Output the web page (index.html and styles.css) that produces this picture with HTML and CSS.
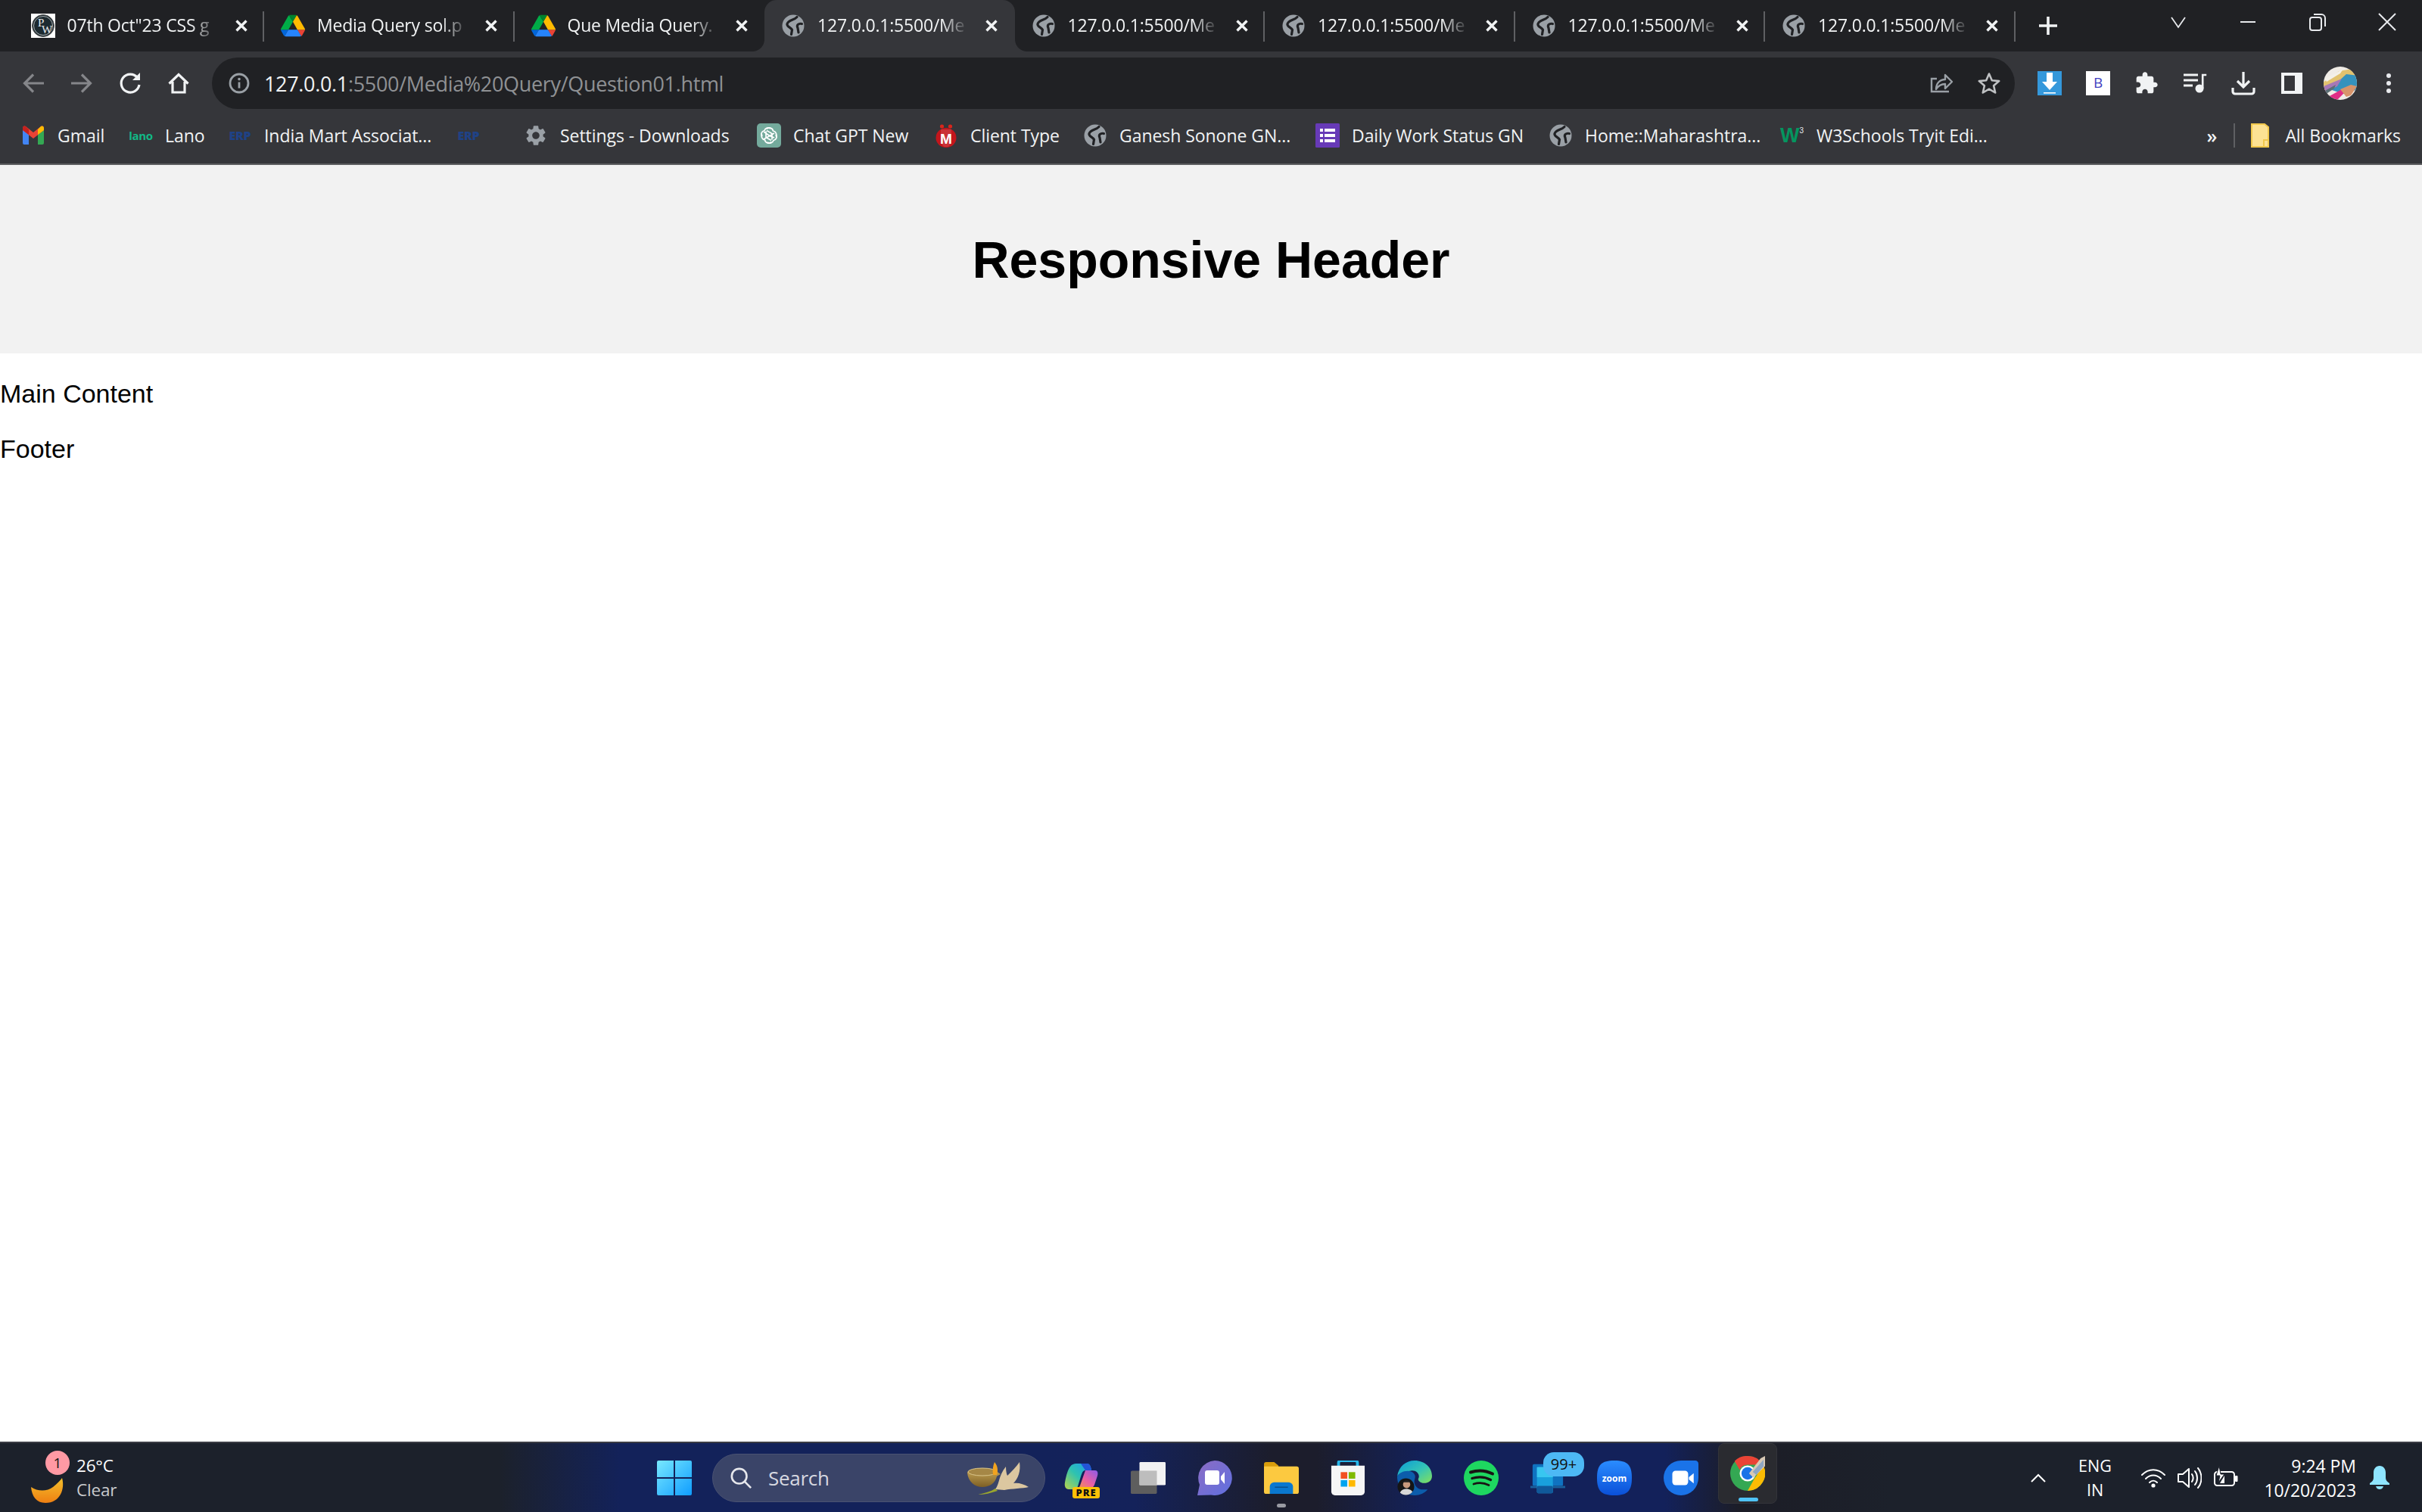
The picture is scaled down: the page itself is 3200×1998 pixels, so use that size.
FILE: index.html
```html
<!DOCTYPE html>
<html lang="en">
<head>
<meta charset="utf-8">
<title>Responsive Header</title>
<link rel="stylesheet" href="styles.css">
</head>
<body>
<svg class="defs" aria-hidden="true">
  <symbol id="globe" viewBox="0 0 32 32"><circle cx="16" cy="16" r="14.500" fill="#9aa0a6"/><g fill="none" stroke="#202124" stroke-width="3.200" stroke-linecap="round"><path d="M21 4.500C17 9 10 8 8 13.500c-1 4 5 4.500 6.500 8l-1 6"/><path d="M27.500 13.500c-4.500-1-7.500 1.500-5.500 5.500l1 6"/></g></symbol>
  <symbol id="drive" viewBox="0 0 87.3 78"><path d="m6.6 66.85 3.85 6.65c.8 1.4 1.95 2.5 3.3 3.3l13.75-23.8h-27.5c0 1.55.4 3.1 1.2 4.5z" fill="#0066da"/><path d="m43.65 25-13.75-23.8c-1.35.8-2.5 1.9-3.3 3.3l-25.4 44a9.06 9.06 0 0 0 -1.2 4.5h27.5z" fill="#00ac47"/><path d="m73.55 76.8c1.35-.8 2.5-1.9 3.3-3.3l1.6-2.75 7.65-13.25c.8-1.4 1.2-2.95 1.2-4.5h-27.502l5.852 11.5z" fill="#ea4335"/><path d="m43.65 25 13.75-23.8c-1.35-.8-2.9-1.2-4.5-1.2h-18.5c-1.6 0-3.15.45-4.5 1.2z" fill="#00832d"/><path d="m59.8 53h-32.3l-13.75 23.8c1.35.8 2.9 1.2 4.5 1.2h50.8c1.6 0 3.15-.45 4.5-1.2z" fill="#2684fc"/><path d="m73.4 26.5-12.7-22c-.8-1.4-1.95-2.5-3.3-3.3l-13.75 23.8 16.15 28h27.45c0-1.55-.4-3.1-1.2-4.5z" fill="#ffba00"/></symbol>
  <symbol id="close" viewBox="0 0 34 34"><path d="M10.5 10.5l13 13M23.5 10.5l-13 13" stroke="#f1f3f4" stroke-width="3.4" fill="none"/></symbol>
</svg>

<div class="chrome">
  <div class="tabstrip">
    <div class="tab sep">
      <svg class="favicon" viewBox="0 0 32 32"><rect width="32" height="32" fill="#fff"/><circle cx="16" cy="16" r="14.5" fill="#1d2a30" stroke="#555" stroke-width="1"/><circle cx="16" cy="16" r="12.5" fill="none" stroke="#cfd3d4" stroke-width=".8"/><text x="9" y="17" class="pw">P</text><text x="14" y="26" class="pw">W</text></svg>
      <span class="title">07th Oct"23 CSS g</span>
      <svg class="close"><use href="#close"/></svg>
    </div>
    <div class="tab sep">
      <svg class="favicon"><use href="#drive"/></svg>
      <span class="title">Media Query sol.p</span>
      <svg class="close"><use href="#close"/></svg>
    </div>
    <div class="tab">
      <svg class="favicon"><use href="#drive"/></svg>
      <span class="title">Que Media Query.</span>
      <svg class="close"><use href="#close"/></svg>
    </div>
    <div class="tab active">
      <svg class="favicon"><use href="#globe"/></svg>
      <span class="title">127.0.0.1:5500/Me</span>
      <svg class="close"><use href="#close"/></svg>
    </div>
    <div class="tab sep">
      <svg class="favicon"><use href="#globe"/></svg>
      <span class="title">127.0.0.1:5500/Me</span>
      <svg class="close"><use href="#close"/></svg>
    </div>
    <div class="tab sep">
      <svg class="favicon"><use href="#globe"/></svg>
      <span class="title">127.0.0.1:5500/Me</span>
      <svg class="close"><use href="#close"/></svg>
    </div>
    <div class="tab sep">
      <svg class="favicon"><use href="#globe"/></svg>
      <span class="title">127.0.0.1:5500/Me</span>
      <svg class="close"><use href="#close"/></svg>
    </div>
    <div class="tab sep">
      <svg class="favicon"><use href="#globe"/></svg>
      <span class="title">127.0.0.1:5500/Me</span>
      <svg class="close"><use href="#close"/></svg>
    </div>
    <svg class="newtab" viewBox="0 0 32 32"><path d="M16 4v24M4 16h24" stroke="#f1f3f4" stroke-width="3.6"/></svg>
    <div class="winctl">
      <svg viewBox="0 0 32 32"><path d="M7 10l9 13 9-13" stroke="#e8eaed" stroke-width="1.8" fill="none"/></svg>
      <svg viewBox="0 0 32 32"><path d="M6 16h20" stroke="#e8eaed" stroke-width="2"/></svg>
      <svg viewBox="0 0 32 32"><rect x="6" y="10" width="15" height="17" rx="3" stroke="#e8eaed" stroke-width="2" fill="none"/><path d="M11 6h10a5 5 0 0 1 5 5v11" stroke="#e8eaed" stroke-width="2" fill="none"/></svg>
      <svg viewBox="0 0 32 32"><path d="M5 5l22 22M27 5L5 27" stroke="#e8eaed" stroke-width="2"/></svg>
    </div>
  </div>

  <div class="toolbar">
    <div class="navbtns">
      <svg viewBox="0 0 32 32"><path d="M30 16H5M16 4.5 4.5 16 16 27.5" stroke="#85868a" stroke-width="3.2" fill="none"/></svg>
      <svg viewBox="0 0 32 32"><path d="M2 16h25M16 4.5 27.5 16 16 27.5" stroke="#85868a" stroke-width="3.2" fill="none"/></svg>
      <svg viewBox="0 0 32 32"><path d="M25.5 8.5A12 12 0 1 0 28 18" stroke="#f1f3f4" stroke-width="3.2" fill="none"/><path d="M19 12h10V2z" fill="#f1f3f4"/></svg>
      <svg viewBox="0 0 32 32"><path d="M3.5 16.5 16 4.5l12.5 12M8 14v14h16V14" stroke="#f1f3f4" stroke-width="3.2" fill="none"/></svg>
    </div>
    <div class="omnibox">
      <svg class="info" viewBox="0 0 28 28"><circle cx="14" cy="14" r="12" stroke="#9aa0a6" stroke-width="2.8" fill="none"/><path d="M14 12.5v8" stroke="#9aa0a6" stroke-width="2.8"/><circle cx="14" cy="8.6" r="1.8" fill="#9aa0a6"/></svg>
      <span class="url"><span class="host">127.0.0.1</span>:5500/Media%20Query/Question01.html</span>
      <svg class="omni-ic" viewBox="0 0 32 32"><path d="M26 27H3V10h7" stroke="#9aa0a6" stroke-width="2.4" fill="none"/><path d="M9 24c0-8 5-13 12-13V5l9 9-9 9v-6c-5 0-9 2-12 7z" stroke="#9aa0a6" stroke-width="2.4" fill="none" stroke-linejoin="round"/></svg>
      <svg class="omni-ic star" viewBox="0 0 32 32"><path d="M16 3.5l3.8 8.7 9.4.9-7.1 6.2 2.1 9.2L16 23.7l-8.2 4.8 2.1-9.2-7.1-6.2 9.4-.9z" stroke="#bfc1c3" stroke-width="2.6" fill="none" stroke-linejoin="round"/></svg>
    </div>
    <div class="extensions">
      <svg viewBox="0 0 32 32"><rect width="32" height="32" fill="#3498db"/><path d="M12 2h8v12h6L16 25 6 14h6z" fill="#fff"/><rect x="8" y="28" width="16" height="1.6" fill="#fff"/></svg>
      <svg viewBox="0 0 32 32"><rect width="32" height="32" fill="#fff"/><text x="16" y="22" class="ext-b">B</text></svg>
      <svg viewBox="0 0 24 24"><path fill="#f1f3f4" d="M20.5 11H19V7c0-1.1-.9-2-2-2h-4V3.5C13 2.12 11.88 1 10.5 1S8 2.12 8 3.5V5H4c-1.1 0-1.99.9-1.99 2v3.8H3.5c1.49 0 2.7 1.21 2.7 2.7s-1.21 2.7-2.7 2.7H2V20c0 1.1.9 2 2 2h3.8v-1.5c0-1.49 1.21-2.7 2.7-2.7 1.49 0 2.7 1.21 2.7 2.7V22H17c1.1 0 2-.9 2-2v-4h1.5c1.38 0 2.5-1.12 2.5-2.5S21.88 11 20.5 11z"/></svg>
      <svg viewBox="0 0 32 32"><path d="M1 5h19M1 12h19M1 19h12" stroke="#f1f3f4" stroke-width="2.8"/><circle cx="22" cy="23" r="5.5" fill="#f1f3f4"/><path d="M26.2 23V5h5" stroke="#f1f3f4" stroke-width="2.6" fill="none"/></svg>
      <svg viewBox="0 0 32 32"><path d="M16 1v20M8 13l8 8 8-8" stroke="#f1f3f4" stroke-width="3.2" fill="none"/><path d="M2 22v5a3 3 0 0 0 3 3h22a3 3 0 0 0 3-3v-5" stroke="#f1f3f4" stroke-width="3.2" fill="none"/></svg>
      <svg viewBox="0 0 32 32"><rect x="2" y="2" width="28" height="28" fill="#f1f3f4"/><rect x="6" y="6" width="14" height="20" fill="#35363a"/></svg>
      <svg class="avatar" viewBox="0 0 44 44"><defs><clipPath id="av"><circle cx="22" cy="22" r="22"/></clipPath></defs><g clip-path="url(#av)"><rect width="44" height="44" fill="#f0ece6"/><path d="M-2 22 20 6 44 2v8L14 24 0 34z" fill="#e2c26e"/><path d="M8 30 30 10l16 2v18L26 36z" fill="#3592bd"/><path d="M0 26 24 16l-6 10-16 8z" fill="#a778b6"/><path d="M6 40l18-10 6 2-12 12z" fill="#e02e86"/><path d="M22 30l14-6 8 2-8 12-6 2z" fill="#d8946a"/><path d="M2 16 26 3l-4 6L4 20z" fill="#f3f0e8"/><path d="M0 33l16-9-2 5-12 8z" fill="#5b6f76"/></g></svg>
      <svg viewBox="0 0 32 32"><circle cx="16" cy="6" r="3" fill="#e8eaed"/><circle cx="16" cy="16" r="3" fill="#e8eaed"/><circle cx="16" cy="26" r="3" fill="#e8eaed"/></svg>
    </div>
  </div>

  <div class="bookmarks">
    <div class="bm w142">
      <svg viewBox="0 0 32 32"><path d="M2 28V8l4-3 4 3v20H4a2 2 0 0 1-2-2z" fill="#4285f4"/><path d="M30 28V8l-4-3-4 3v20h6a2 2 0 0 0 2-2z" fill="#34a853"/><path d="M2 9l14 11L30 9v-3a2.500 2.500 0 0 0-4-2L16 12 6 4a2.500 2.500 0 0 0-4 2z" fill="#ea4335"/><path d="M22 8l4-4a2.500 2.500 0 0 1 4 2v3l-8 6z" fill="#fbbc04"/><path d="M10 8 6 4a2.500 2.500 0 0 0-4 2v3l8 6z" fill="#c5221f"/></svg>
      <span>Gmail</span>
    </div>
    <div class="bm w131"><b class="lano">lano</b><span>Lano</span></div>
    <div class="bm w302"><b class="erp">ERP</b><span>India Mart Associat...</span></div>
    <div class="bm w89"><b class="erp">ERP</b></div>
    <div class="bm w308">
      <svg viewBox="0 0 24 24"><path fill="#9aa0a6" d="M19.14 12.94c.04-.3.06-.61.06-.94 0-.32-.02-.64-.07-.94l2.03-1.58c.18-.14.23-.41.12-.61l-1.92-3.32c-.12-.22-.37-.29-.59-.22l-2.39.96c-.5-.38-1.03-.7-1.62-.94l-.36-2.54c-.04-.24-.24-.41-.48-.41h-3.84c-.24 0-.43.17-.47.41l-.36 2.54c-.59.24-1.13.57-1.62.94l-2.39-.96c-.22-.08-.47 0-.59.22L2.74 8.87c-.12.21-.08.47.12.61l2.03 1.58c-.05.3-.09.63-.09.94s.02.64.07.94l-2.03 1.58c-.18.14-.23.41-.12.61l1.92 3.32c.12.22.37.29.59.22l2.39-.96c.5.38 1.03.7 1.62.94l.36 2.54c.05.24.24.41.48.41h3.84c.24 0 .44-.17.47-.41l.36-2.54c.59-.24 1.13-.56 1.62-.94l2.39.96c.22.08.47 0 .59-.22l1.92-3.32c.12-.22.07-.47-.12-.61l-2.01-1.58zM12 15.6c-1.98 0-3.6-1.62-3.6-3.6s1.62-3.6 3.6-3.6 3.6 1.62 3.6 3.6-1.62 3.6-3.6 3.6z"/></svg>
      <span>Settings - Downloads</span>
    </div>
    <div class="bm w234">
      <svg viewBox="0 0 32 32"><rect width="32" height="32" rx="5" fill="#74aa9c"/><g fill="none" stroke="#fff" stroke-width="1.7"><path d="M13 7.500a5 5 0 0 1 8.500 2.500 5 5 0 0 1 3.500 7.500"/><path d="M25 14.500a5 5 0 0 1-3 8 5 5 0 0 1-8 2.500"/><path d="M19 24.500a5 5 0 0 1-8.500-2.500 5 5 0 0 1-3.500-7.500"/><path d="M7 17.500a5 5 0 0 1 3-8 5 5 0 0 1 8-2.500"/><path d="M12 10.500v8l7 4M20 21.500v-8l-7-4M9 21l7-4 7-4M23 19l-7-3-7-5"/></g></svg>
      <span>Chat GPT New</span>
    </div>
    <div class="bm w197">
      <svg viewBox="0 0 32 32"><circle cx="10.500" cy="4" r="2.600" fill="#d9261c"/><circle cx="21.500" cy="4" r="2.600" fill="#d9261c"/><ellipse cx="16" cy="19" rx="13.500" ry="13" fill="#c3161c"/><path d="M9 8h14v18l-4 5h-6l-4-5z" fill="#fff" opacity=".12"/><text x="16" y="27" class="client-m">M</text></svg>
      <span>Client Type</span>
    </div>
    <div class="bm w307"><svg><use href="#globe"/></svg><span>Ganesh Sonone GN...</span></div>
    <div class="bm w308">
      <svg viewBox="0 0 32 32"><rect width="32" height="32" rx="1.500" fill="#673ab7"/><g fill="#fff"><rect x="6" y="7" width="4" height="4"/><rect x="12" y="7" width="14" height="4"/><rect x="6" y="14" width="4" height="4"/><rect x="12" y="14" width="14" height="4"/><rect x="6" y="21" width="4" height="4"/><rect x="12" y="21" width="14" height="4"/></g></svg>
      <span>Daily Work Status GN</span>
    </div>
    <div class="bm w306"><svg><use href="#globe"/></svg><span>Home::Maharashtra...</span></div>
    <div class="bm">
      <b class="w3">W<sup>3</sup></b>
      <span>W3Schools Tryit Edi...</span>
    </div>
    <div class="bm-end">
      <span class="more">»</span>
      <i class="bm-sep"></i>
      <svg class="folder" viewBox="0 0 24 32"><path d="M1 1h17l5 4v26H1z" fill="#fde293" stroke="#f2c94c" stroke-width="2"/><path d="M23 22h-6v9" fill="none" stroke="#f2c94c" stroke-width="2"/></svg>
      <span>All Bookmarks</span>
    </div>
  </div>
</div>

<div class="page">
  <header class="site-header"><h1>Responsive Header</h1></header>
  <main><p>Main Content</p></main>
  <footer><p>Footer</p></footer>
</div>

<div class="taskbar">
  <div class="weather">
    <div class="moon">
      <svg viewBox="0 0 46 34"><defs><linearGradient id="mo" x1="0" y1="0" x2="0" y2="1"><stop offset="0" stop-color="#f4c02c"/><stop offset="1" stop-color="#ee7f12"/></linearGradient></defs><path d="M1 12C10 18 22 18 30 12 36 7 40 3 42 0c4 14-2 33-22 33C8 33 2 24 1 12z" fill="url(#mo)"/></svg>
      <span class="badge-1">1</span>
    </div>
    <div class="wtext"><span>26°C</span><span class="clear">Clear</span></div>
  </div>
  <div class="slot">
    <svg class="winlogo" viewBox="0 0 46 46"><defs><linearGradient id="wl" x1="0" y1="0" x2="1" y2="1"><stop offset="0" stop-color="#78e8ff"/><stop offset="1" stop-color="#0f9dff"/></linearGradient></defs><path d="M2 0h20v22H0V2a2 2 0 0 1 2-2zM24 0h20a2 2 0 0 1 2 2v20H24zM0 24h22v22H2a2 2 0 0 1-2-2zM24 24h22v20a2 2 0 0 1-2 2H24z" fill="url(#wl)"/></svg>
  </div>
  <div class="search">
    <svg class="mag" viewBox="0 0 32 32"><circle cx="13.500" cy="13.500" r="10.500" stroke="#e6e7ec" stroke-width="2.800" fill="none"/><path d="M21 21l9 9" stroke="#e6e7ec" stroke-width="2.800"/></svg>
    <span>Search</span>
    <svg class="lamp" viewBox="0 0 90 46"><defs><linearGradient id="lp" x1="0" y1="0" x2="0" y2="1"><stop offset="0" stop-color="#c9a95a"/><stop offset="1" stop-color="#7d5f25"/></linearGradient></defs><path d="M1 16C3 9 35 8 42 16l3 2c-2 1-4 2-5 3-2 9-10 14-19 14C11 35 2 28 1 16z" fill="url(#lp)"/><ellipse cx="21" cy="15" rx="19" ry="5" fill="#a58746" stroke="#d9c48a"/><path d="M37 2c4 5 5 10 3 17h-5c-1-7 0-12 2-17z" fill="#f2a31f"/><path d="M38 38c6-8 4-18 14-30 0 6 1 10 2 12 6-6 12-12 16-18 2 12-2 22-8 28 6-1 14 1 20 5-8 2-22 2-32 4z" fill="#dcc7a0"/><path d="M15 45c9-2 17-4 23-8l3 3c-9 3-17 5-26 5z" fill="#9aa52e"/></svg>
  </div>
  <div class="apps">
    <div class="slot">
      <svg viewBox="0 -4 46 46"><defs><linearGradient id="co1" x1="0" y1="1" x2="1" y2="0"><stop offset="0" stop-color="#b8d44a"/><stop offset=".5" stop-color="#2ec3b0"/><stop offset="1" stop-color="#1d9bf0"/></linearGradient><linearGradient id="co2" x1="0" y1="1" x2="1" y2="0"><stop offset="0" stop-color="#f0a03a"/><stop offset=".5" stop-color="#ea5fa4"/><stop offset="1" stop-color="#8a5be8"/></linearGradient></defs><path d="M28 9h13c3 0 4 3 3 7l-4 12c-2 4-5 6-10 6H14c4 0 6-2 7-5l7-20z" fill="url(#co2)"/><path d="M1 25C3 14 5 8 8 4c2-3 5-4 8-4h14c3 0 5 2 6 9h-8c-3 0-4 2-6 8l-4 13c-1 3-4 4-10 4H6c-4 0-6-4-5-9z" fill="url(#co1)"/><path d="M22 0h8c3 0 5 2 6 9h-8z" fill="#2354d6"/></svg>
      <span class="pre">PRE</span>
    </div>
    <div class="slot">
      <svg viewBox="0 0 48 48"><rect x="0" y="14" width="36" height="32" rx="2" fill="#5e5e5e"/><rect x="12" y="2" width="36" height="32" rx="1.500" fill="#f2f2f2"/><rect x="12" y="14" width="24" height="20" fill="#bdbdbd"/></svg>
    </div>
    <div class="slot">
      <svg viewBox="0 0 46 46"><defs><linearGradient id="mt" x1="0" y1="0" x2="1" y2="1"><stop offset="0" stop-color="#8c6cc4"/><stop offset="1" stop-color="#5f70e0"/></linearGradient></defs><path d="M23 0a23 23 0 1 1-5 45.500L0 46l3-14A23 23 0 0 1 23 0z" fill="url(#mt)"/><rect x="10" y="13" width="19" height="19" rx="3" fill="#fff"/><path d="M31 21l5-6v16l-5-6z" fill="#fff"/></svg>
    </div>
    <div class="slot">
      <svg viewBox="0 0 48 44"><path d="M0 3a3 3 0 0 1 3-3h11l6 5v10H0z" fill="#d99d0b"/><path d="M0 6h45a3 3 0 0 1 3 3v32a3 3 0 0 1-3 3H3a3 3 0 0 1-3-3z" fill="#fcc940"/><path d="M8 44V34a6 6 0 0 1 6-6h20a6 6 0 0 1 6 6v10z" fill="#0a78cf"/><rect x="15" y="34" width="18" height="1.500" fill="#0a4f8a"/></svg>
      <i class="running"></i>
    </div>
    <div class="slot">
      <svg viewBox="0 0 46 48"><path d="M10 9V3a3 3 0 0 1 3-3h20a3 3 0 0 1 3 3v6" fill="none" stroke="#26b6ea" stroke-width="4"/><path d="M0 7h46v36a5 5 0 0 1-5 5H5a5 5 0 0 1-5-5z" fill="#f6f6f6"/><rect x="13" y="16" width="9" height="9" fill="#f25022"/><rect x="24" y="16" width="9" height="9" fill="#7fba00"/><rect x="13" y="27" width="9" height="9" fill="#00a4ef"/><rect x="24" y="27" width="9" height="9" fill="#ffb900"/></svg>
    </div>
    <div class="slot">
      <svg viewBox="0 0 48 48"><defs><linearGradient id="ed" x1="0" y1="0" x2="1" y2="1"><stop offset="0" stop-color="#0b9bd8"/><stop offset=".55" stop-color="#35c5b5"/><stop offset="1" stop-color="#84e05a"/></linearGradient><clipPath id="edav"><circle cx="12" cy="36" r="11.500"/></clipPath></defs><path d="M0 22C2 8 12 0 24 0c14 0 24 10 24 21 0 7-5 10-11 10-5 0-8-3-8-5 0-1 1-2 1-4 0-5-5-9-11-8C10 15 2 17 0 22z" fill="url(#ed)"/><path d="M0 22c3-6 12-9 19-7 5 2 7 6 5 11-2 8 4 14 12 14h6c-4 5-11 8-18 8C10 48 0 37 0 22z" fill="#0c5dab"/><g clip-path="url(#edav)"><rect y="24" width="24" height="24" fill="#151515"/><circle cx="13" cy="33" r="5" fill="#c99a7d"/><path d="M3 48c1-8 6-9 10-9s9 2 10 9z" fill="#d8d8d8"/><path d="M8 30c2-4 8-4 10 0z" fill="#222"/></g></svg>
    </div>
    <div class="slot">
      <svg viewBox="0 0 46 46"><circle cx="23" cy="23" r="23" fill="#1ed760"/><g fill="none" stroke="#191414" stroke-linecap="round"><path d="M9 15.500c9-3 20-2.500 29 2" stroke-width="4"/><path d="M11 23.500c8-2.500 17-2 24.500 2" stroke-width="3.400"/><path d="M13 31c6-1.800 14-1.500 20 1.500" stroke-width="2.800"/></g></svg>
    </div>
    <div class="slot">
      <svg class="outlook" viewBox="0 0 48 42"><rect x="3" y="2" width="42" height="30" rx="2" fill="#0f72c0"/><rect x="0" y="32" width="48" height="3" fill="#1a5f9c"/><rect x="9" y="6" width="22" height="36" rx="2" fill="#19a0dc"/><rect x="9" y="6" width="22" height="14" fill="#38c6f0"/><rect x="9" y="32" width="22" height="10" rx="2" fill="#10599a"/></svg>
      <span class="count">99+</span>
    </div>
    <div class="slot">
      <svg viewBox="0 0 48 48"><defs><linearGradient id="zm" x1="0" y1="0" x2="0" y2="1"><stop offset="0" stop-color="#2a8cff"/><stop offset="1" stop-color="#0a50d8"/></linearGradient></defs><path d="M24 0c18 0 24 6 24 24s-6 24-24 24S0 42 0 24 6 0 24 0z" fill="url(#zm)"/><text x="24" y="29" class="zoomtxt">zoom</text></svg>
    </div>
    <div class="slot">
      <svg viewBox="0 0 44 44"><path d="M22 0h18a4 4 0 0 1 4 4v18a22 22 0 1 1-22-22z" fill="#1a73e8"/><rect x="11" y="13" width="20" height="18" rx="4" fill="#fff"/><path d="M32 21l6-5v13l-6-5z" fill="#fff"/></svg>
    </div>
    <div class="slot active-app">
      <svg class="chrome-ic" viewBox="0 0 48 48"><circle cx="24" cy="24" r="24" fill="#34a853"/><path d="M24 0a24 24 0 0 1 21 12H24a12 12 0 0 0-11 7L6 7A24 24 0 0 1 24 0z" fill="#ea4335"/><path d="M45 12a24 24 0 0 1-21 36l10-18a12 12 0 0 0 0-18z" fill="#fbbc04"/><circle cx="24" cy="24" r="11" fill="#fff"/><circle cx="24" cy="24" r="8.500" fill="#1a73e8"/><path d="M26 24 42 3l6-3v14L32 30z" fill="#d8c9b5"/><path d="M31 22 46 5v9L36 26z" fill="#8fa7c4"/></svg>
      <i class="indicator"></i>
    </div>
  </div>
  <div class="tray">
    <svg class="chev" viewBox="0 0 24 24"><path d="M3 17 12 8l9 9" stroke="#fff" stroke-width="2" fill="none"/></svg>
    <div class="lang"><span>ENG</span><span>IN</span></div>
    <div class="trayicons">
      <svg viewBox="0 0 32 32"><g fill="none" stroke="#fff" stroke-width="2" stroke-linecap="round"><path d="M1 12c9-9 21-9 30 0"/><path d="M6 17c6-6 14-6 20 0"/><path d="M11 22c3-3 7-3 10 0"/></g><circle cx="16" cy="26" r="2.600" fill="#fff"/></svg>
      <svg viewBox="0 0 32 32"><path d="M1 11v10h6l8 7V4l-8 7z" stroke="#fff" stroke-width="2" fill="none" stroke-linejoin="round"/><path d="M19 11c2 3 2 7 0 10M23 7c4 5 4 13 0 18M27 3c6 7 6 19 0 26" stroke="#fff" stroke-width="2" fill="none" stroke-linecap="round"/></svg>
      <svg viewBox="0 0 32 32"><rect x="1" y="8" width="26" height="18" rx="3.500" stroke="#fff" stroke-width="2" fill="none"/><rect x="28" y="13" width="3.500" height="8" rx="1" fill="#fff"/><path d="M7 0 3 13h5l-2 9 8-11H9z" fill="#fff" stroke="#1c212b" stroke-width="1"/><path d="M8 23l6-10v10z" fill="#fff"/></svg>
    </div>
    <div class="clock"><span>9:24 PM</span><span>10/20/2023</span></div>
    <svg class="bell" viewBox="0 0 26 31"><path d="M13 0c5 0 8 4 8 9v7c0 3 2 5 5 7v2H0v-2c3-2 5-4 5-7V9c0-5 3-9 8-9z" fill="#8fe5ff"/><path d="M8 27h10c-1 3-3 4-5 4s-4-1-5-4z" fill="#8fe5ff"/></svg>
  </div>
</div>
</body>
</html>
```
FILE: styles.css
```css
* { box-sizing: border-box; }
html, body { margin: 0; height: 100%; }
body {
  display: flex;
  flex-direction: column;
  height: 100vh;
  overflow: hidden;
  background: #fff;
  font-family: "Liberation Sans", Arial, sans-serif;
}
.defs { display: none; }
svg { display: block; flex: none; }

/* browser chrome */
.chrome {
  flex: none;
  font-family: "Open Sans", "Noto Sans", sans-serif;
  color: #f1f3f4;
  font-size: 23px;
  letter-spacing: -.05px;
}
.tabstrip {
  display: flex;
  height: 68px;
  background: #202124;
  padding-left: 18.5px;
}
.tab {
  position: relative;
  width: 330.5px;
  flex: none;
  display: flex;
  align-items: center;
  padding-left: 22px;
}
.tab.sep::after {
  content: "";
  position: absolute;
  right: 0;
  top: 15px;
  height: 40px;
  width: 2px;
  background: #5f6063;
}
.tab.active {
  background: #35363a;
  border-radius: 16px 16px 0 0;
}
.tab.active::before,
.tab.active::after {
  content: "";
  position: absolute;
  bottom: 0;
  width: 16px;
  height: 16px;
}
.tab.active::before {
  left: -16px;
  background: radial-gradient(circle at 0 0, #202124 15.5px, #35363a 16.5px);
}
.tab.active::after {
  right: -16px;
  background: radial-gradient(circle at 100% 0, #202124 15.5px, #35363a 16.5px);
}
.favicon { width: 32px; height: 32px; }
.pw { font: 15px "Liberation Serif", serif; fill: #e8eaed; }
.title {
  width: 200px;
  margin-left: 16px;
  padding-bottom: 2px;
  white-space: nowrap;
  letter-spacing: -.2px;
  -webkit-mask-image: linear-gradient(90deg, #000 82%, transparent 100%);
  mask-image: linear-gradient(90deg, #000 82%, transparent 100%);
}
.close { width: 34px; height: 34px; margin-left: 13px; }
.newtab { width: 32px; height: 32px; margin: 18px 0 0 27px; }
.winctl {
  margin-left: auto;
  display: flex;
  align-items: flex-start;
}
.winctl svg { width: 92px; height: 32px; margin-top: 13px; }

.toolbar {
  display: flex;
  align-items: center;
  height: 76px;
  padding: 8px 12px 0;
  background: #35363a;
}
.navbtns { display: flex; }
.navbtns svg { width: 32px; height: 32px; margin: 0 16px; }
.omnibox {
  flex: 1;
  height: 68px;
  margin: 0 14px 0 12px;
  padding: 0 18px 0 22px;
  background: #202124;
  border-radius: 34px;
  display: flex;
  align-items: center;
}
.info { width: 28px; height: 28px; }
.url {
  margin-left: 19px;
  font-size: 27px;
  letter-spacing: -.33px;
  color: #8f9194;
}
.host { color: #f1f3f4; }
.omni-ic { width: 32px; height: 32px; margin-left: auto; }
.omni-ic.star { margin-left: 31px; }
.extensions { display: flex; align-items: center; }
.extensions svg { width: 32px; height: 32px; margin: 0 16px; }
.extensions .avatar { width: 44px; height: 44px; margin: 0 10px; }

.bookmarks {
  display: flex;
  align-items: center;
  height: 74px;
  padding: 0 28px 2px;
  background: #35363a;
  border-bottom: 2px solid #5d5e61;
}
.bm { display: flex; align-items: center; gap: 16px; flex: none; white-space: nowrap; }
.bm svg { width: 32px; height: 32px; }
.w142 { width: 142px; }
.w131 { width: 131px; }
.w302 { width: 302px; }
.w89 { width: 89px; }
.w308 { width: 308px; }
.w234 { width: 234px; }
.w197 { width: 197px; }
.w307 { width: 307px; }
.w306 { width: 306px; }
.lano {
  width: 32px;
  font: 700 15px "Open Sans", sans-serif;
  letter-spacing: -.3px;
  color: #12b886;
  text-align: center;
}
.erp {
  width: 32px;
  font: 800 16px "Open Sans", sans-serif;
  letter-spacing: -.3px;
  color: #1f4286;
  text-align: center;
}
.client-m { font: 700 19px "Liberation Sans", sans-serif; fill: #fff; text-anchor: middle; }
.w3 {
  width: 32px;
  font: 700 27px/32px "Liberation Sans", sans-serif;
  letter-spacing: 0;
  color: #04955f;
  white-space: nowrap;
}
.w3 sup { font-size: 10px; line-height: 0; color: #e8eaed; vertical-align: 12px; font-weight: 400; }
.ext-b { font: 19px "Open Sans", sans-serif; fill: #3f3fc0; text-anchor: middle; }
.bm-end {
  margin-left: auto;
  display: flex;
  align-items: center;
}
.more { font-size: 25px; font-weight: 600; line-height: 1; width: 14px; }
.bm-sep { width: 2px; height: 32px; margin: 0 21px 0 22px; background: #5f6063; }
.folder { width: 24px; height: 32px; margin-right: 21px; }

/* page content */
.page { flex: 1; min-height: 0; color: #000; }
.site-header {
  padding: 40px;
  background: #f2f2f2;
  text-align: center;
}
.site-header h1 { font-size: 68px; margin: 45.5px 0; font-weight: 700; }
.page p { font-size: 34px; margin: 34px 0; }

/* taskbar */
.taskbar {
  flex: none;
  height: 93px;
  display: flex;
  align-items: center;
  border-top: 2px solid #3b3c44;
  font-family: "Open Sans", "Noto Sans", sans-serif;
  color: #fff;
  background: linear-gradient(90deg,
    #1c212b 0, #1c212b 660px, #13225a 820px, #13225a 1380px,
    #14225a 1500px, #1c1d2c 1680px, #1c1d2c 1740px, #13215a 1880px, #13215a 2200px,
    #1c1d26 2300px, #1c212b 2500px, #1c212b 100%);
}
.weather { width: 847px; display: flex; align-items: center; flex: none; padding-left: 40px; position: relative; }
.moon { width: 46px; height: 60px; position: relative; }
.moon svg { position: absolute; left: 0; bottom: -4px; width: 46px; height: 34px; }
.badge-1 {
  position: absolute;
  left: 20px;
  top: -6px;
  width: 32px;
  height: 32px;
  border-radius: 50%;
  background: #ff99a4;
  color: #111;
  font: 19px/32px "Open Sans", sans-serif;
  text-align: center;
}
.wtext { display: flex; flex-direction: column; margin-left: 15px; font-size: 22.5px; line-height: 32px; letter-spacing: -.2px; }
.clear { color: #c9cbce; }
.slot {
  position: relative;
  flex: none;
  width: 88px;
  height: 91px;
  display: flex;
  align-items: center;
  justify-content: center;
}
.slot svg { width: 46px; height: 46px; }
.search {
  width: 440px;
  height: 64px;
  margin-left: 6px;
  flex: none;
  display: flex;
  align-items: center;
  padding-left: 22px;
  border: 1.5px solid #4a5272;
  border-radius: 32px;
  background: #3a4468;
  font-size: 26px;
  letter-spacing: -.3px;
  color: #d6d8e0;
}
.mag { width: 30px; height: 30px; margin-right: 21px; }
.lamp { width: 90px; height: 46px; margin-left: auto; margin-right: 13px; }
.apps { display: flex; margin-left: 4px; flex: none; }
.pre {
  position: absolute;
  left: 32px;
  top: 58px;
  width: 36px;
  height: 15px;
  border-radius: 3px;
  background: #ffc107;
  color: #111;
  font: 800 13px/15px "Open Sans", sans-serif;
  letter-spacing: 1px;
  text-align: center;
}
.running {
  position: absolute;
  left: 38px;
  bottom: 6px;
  width: 12px;
  height: 5px;
  border-radius: 3px;
  background: #9a9ba3;
}
.count {
  position: absolute;
  left: 38px;
  top: 12px;
  width: 54px;
  height: 32px;
  border-radius: 14px;
  background: #4db8f5;
  color: #111;
  font: 20px/32px "Open Sans", sans-serif;
  text-align: center;
}
.zoomtxt { font: 700 12.5px "Open Sans", sans-serif; fill: #fff; text-anchor: middle; }
.active-app {
  width: 78px;
  margin-left: 5px;
  height: 80px;
  border-radius: 8px;
  background: #2a2b30;
  border: 1px solid #33343a;
}
.active-app .chrome-ic { width: 46px; height: 46px; }
.indicator {
  position: absolute;
  left: 26px;
  bottom: 2px;
  width: 26px;
  height: 5px;
  border-radius: 3px;
  background: #4fc3f7;
}
.tray { margin-left: auto; display: flex; align-items: center; padding-right: 43px; flex: none; }
.chev { width: 24px; height: 24px; margin: 0 8px; }
.lang {
  width: 56px;
  margin-left: 27px;
  display: flex;
  flex-direction: column;
  align-items: center;
  font-size: 21.5px;
  line-height: 32px;
}
.trayicons { display: flex; gap: 16px; margin-left: 33px; }
.trayicons svg { width: 32px; height: 32px; }
.clock {
  width: 156px;
  display: flex;
  flex-direction: column;
  align-items: flex-end;
  font-size: 23px;
  line-height: 32px;
  letter-spacing: -.05px;
}
.bell { width: 26px; height: 31px; margin-left: 18px; }
```
